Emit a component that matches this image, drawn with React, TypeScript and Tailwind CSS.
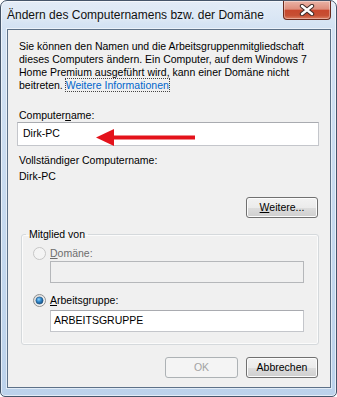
import React from 'react';

const Button: React.FC<{ children: React.ReactNode; width: string; disabled?: boolean }> = ({ children, width, disabled }) => (
  <button
    disabled={disabled}
    className={
      disabled
        ? `${width} h-[21px] rounded-[3px] border border-[#adb2b5] bg-[#f4f4f4] text-[#a3a3a3] leading-none`
        : `${width} h-[21px] rounded-[3px] border border-[#707070] bg-[linear-gradient(to_bottom,#f2f2f2,#ebebeb_50%,#dddddd_50%,#cfcfcf)] shadow-[inset_0_0_0_1px_#fcfcfc] text-black leading-none`
    }
  >
    {children}
  </button>
);

const Radio: React.FC<{ checked?: boolean; disabled?: boolean }> = ({ checked, disabled }) => (
  <svg width="13" height="13" viewBox="0 0 13 13" className="shrink-0">
    <defs>
      <linearGradient id="rb" x1="0" y1="0" x2="1" y2="1">
        <stop offset="0" stopColor="#d6d6d6" />
        <stop offset="1" stopColor="#ffffff" />
      </linearGradient>
      <radialGradient id="rdot" cx="0.4" cy="0.35" r="0.7">
        <stop offset="0" stopColor="#8fd3ff" />
        <stop offset="0.5" stopColor="#2d83c6" />
        <stop offset="1" stopColor="#174a78" />
      </radialGradient>
    </defs>
    <circle cx="6.5" cy="6.5" r="6" fill={disabled ? '#f4f4f4' : 'url(#rb)'} stroke={disabled ? '#c5c5c5' : '#8e8f8f'} />
    {checked && <circle cx="6.5" cy="6.5" r="3.6" fill="url(#rdot)" stroke="#1d4f7c" strokeWidth="0.6" />}
  </svg>
);

export default function App() {
  return (
    <div className="w-[337px] h-[397px] font-['Liberation_Sans',Arial,sans-serif] text-[10.5px] text-black">
      <div className="flex h-full w-full flex-col rounded-t-[7px] rounded-b-[5px] border border-[#45556a] bg-[linear-gradient(to_bottom,#e3ecf7,#d3e2f3_28px,#c7daef_200px,#bcd2eb)] shadow-[inset_0_0_0_1px_rgba(255,255,255,0.6)]">
        {/* title bar */}
        <div className="flex h-[28px] items-start">
          <div className="flex h-[27px] items-center pl-[6px] text-[12px] text-[#111] [text-shadow:0_0_6px_#fff]">
            Ändern des Computernamens bzw. der Domäne
          </div>
          <div className="ml-auto mr-[5px] flex h-[19px] w-[48px] items-center justify-center rounded-b-[4px] border border-t-0 border-[#6b2a1d] bg-[linear-gradient(to_bottom,#eab3a6,#de8e7c_45%,#c8472d_52%,#c64f33_80%,#dd7f63)] shadow-[inset_0_0_0_1px_rgba(255,255,255,0.35)]">
            <svg width="16" height="12" viewBox="0 0 16 12">
              <path d="M3 2 L13 10 M13 2 L3 10" stroke="#3d2a27" strokeWidth="4.4" strokeLinecap="round" />
              <path d="M3 2 L13 10 M13 2 L3 10" stroke="#ffffff" strokeWidth="2.4" strokeLinecap="round" />
            </svg>
          </div>
        </div>

        {/* client area */}
        <div className="mb-[8px] ml-[6px] mr-[5px] flex flex-1 flex-col border border-[#5d7188] bg-[#f0f0f0] pl-[9px] pr-[11px] shadow-[0_0_0_1px_rgba(255,255,255,0.55)]">
          <p className="ml-[2px] mt-[10px] whitespace-nowrap leading-[13px]">
            Sie können den Namen und die Arbeitsgruppenmitgliedschaft<br />
            dieses Computers ändern. Ein Computer, auf dem Windows 7<br />
            Home Premium ausgeführt wird, kann einer Domäne nicht<br />
            beitreten.{' '}
            <span className="text-[#0066cc] outline outline-1 outline-dotted outline-[#444]">Weitere Informationen</span>
          </p>

          <div className="ml-[2px] mt-[17px] h-[13px] leading-[13px]">
            Computer<span className="underline">n</span>ame:
          </div>
          <div className="relative flex h-[24px] items-center border border-[#c4c6cb] border-t-[#a9abb0] bg-white pl-[5px]">
            Dirk-PC
            <svg className="absolute left-[78px] top-[6px]" width="100" height="17" viewBox="0 0 100 17">
              <polygon points="0,8.5 18,0 18,17" fill="#e4121b" />
              <rect x="16" y="6.5" width="83" height="4" fill="#e4121b" />
            </svg>
          </div>

          <div className="ml-[2px] mt-[8px] h-[13px] leading-[13px]">Vollständiger Computername:</div>
          <div className="ml-[2px] mt-[3px] h-[13px] leading-[13px]">Dirk-PC</div>

          <div className="mt-[14px] flex justify-end pr-[1px]">
            <Button width="w-[72px]">
              <span className="underline">W</span>eitere...
            </Button>
          </div>

          <fieldset className="ml-[4px] mt-[10px] rounded-[3px] border border-[#d5d9dc] pb-[12px] shadow-[inset_0_0_0_1px_#fbfbfb]">
            <legend className="ml-[4px] px-[3px] leading-[13px]">Mitglied von</legend>
            <div className="mt-[6px] flex h-[13px] items-center gap-[4px] pl-[11px] leading-[13px] text-[#6d6d6d]">
              <Radio disabled />
              <span>
                <span className="underline">D</span>omäne:
              </span>
            </div>
            <div className="ml-[28px] mr-[14px] mt-[1px] h-[22px] border border-[#b5b7ba] bg-[#f0f0f0]" />

            <div className="mt-[11px] flex h-[13px] items-center gap-[4px] pl-[11px] leading-[13px]">
              <Radio checked />
              <span>
                <span className="underline">A</span>rbeitsgruppe:
              </span>
            </div>
            <div className="ml-[28px] mr-[14px] mt-[3px] flex h-[22px] items-center border border-[#c4c6cb] border-t-[#a9abb0] bg-white pl-[3px]">
              ARBEITSGRUPPE
            </div>
          </fieldset>

          <div className="mt-[12px] flex justify-end gap-[8px] pr-[1px]">
            <Button width="w-[73px]" disabled>
              OK
            </Button>
            <Button width="w-[72px]">Abbrechen</Button>
          </div>
        </div>
      </div>
    </div>
  );
}
